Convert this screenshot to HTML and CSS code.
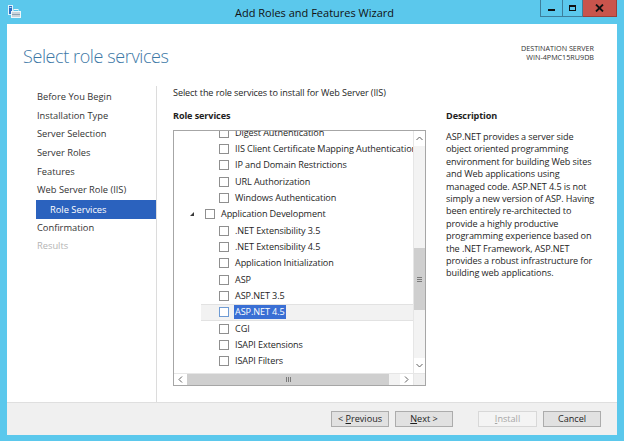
FILE: index.html
```html
<!DOCTYPE html>
<html>
<head>
<meta charset="utf-8">
<link rel="stylesheet" href="styles.css">
</head>
<body>
<div class="window">
  <div class="titlebar">
    <svg class="appicon" width="13" height="13" viewBox="0 0 13 13">
      <rect x="0.5" y="0.5" width="4" height="9" fill="#2f6fc4" stroke="#dff3fb" stroke-width="1"/>
      <rect x="1.5" y="2" width="2" height="1" fill="#bfe4f7"/>
      <rect x="3.5" y="6.5" width="9" height="6" fill="#c9d3db" stroke="#eef6fa" stroke-width="1"/>
      <rect x="6" y="4.5" width="4" height="2" fill="none" stroke="#eef6fa" stroke-width="1"/>
      <rect x="4" y="9" width="8" height="1" fill="#8ea2b2"/>
    </svg>
    <div class="title">Add Roles and Features Wizard</div>
    <div class="controls">
      <div class="ctl min"><span class="minbar"></span></div>
      <div class="ctl max"><span class="maxbox"></span></div>
      <div class="ctl close">
        <svg width="9" height="8" viewBox="0 0 9 8"><path d="M1 0.5 L8 7.5 M8 0.5 L1 7.5" stroke="#111" stroke-width="1.8"/></svg>
      </div>
    </div>
  </div>
  <div class="client">
    <div class="header">
      <h1 class="pagetitle">Select role services</h1>
      <div class="dest">
        <div>DESTINATION SERVER</div>
        <div>WIN-4PMC15RU9DB</div>
      </div>
    </div>
    <div class="body">
      <nav class="nav">
        <div class="navitem">Before You Begin</div>
        <div class="navitem">Installation Type</div>
        <div class="navitem">Server Selection</div>
        <div class="navitem">Server Roles</div>
        <div class="navitem">Features</div>
        <div class="navitem">Web Server Role (IIS)</div>
        <div class="navitem active">Role Services</div>
        <div class="navitem">Confirmation</div>
        <div class="navitem disabled">Results</div>
      </nav>
      <div class="main">
        <p class="intro">Select the role services to install for Web Server (IIS)</p>
        <div class="columns">
          <div class="leftcol">
            <h2 class="heading">Role services</h2>
            <div class="treebox">
              <div class="treearea">
                <div class="viewport">
                  <div class="tree">
                    <div class="row l2"><div class="inner"><span class="exp"></span><span class="cb"></span><span class="lbl">Digest Authentication</span></div></div>
                    <div class="row l2"><div class="inner"><span class="exp"></span><span class="cb"></span><span class="lbl">IIS Client Certificate Mapping Authentication</span></div></div>
                    <div class="row l2"><div class="inner"><span class="exp"></span><span class="cb"></span><span class="lbl">IP and Domain Restrictions</span></div></div>
                    <div class="row l2"><div class="inner"><span class="exp"></span><span class="cb"></span><span class="lbl">URL Authorization</span></div></div>
                    <div class="row l2"><div class="inner"><span class="exp"></span><span class="cb"></span><span class="lbl">Windows Authentication</span></div></div>
                    <div class="row l1"><div class="inner"><span class="exp"><span class="tri"></span></span><span class="cb"></span><span class="lbl">Application Development</span></div></div>
                    <div class="row l2"><div class="inner"><span class="exp"></span><span class="cb"></span><span class="lbl">.NET Extensibility 3.5</span></div></div>
                    <div class="row l2"><div class="inner"><span class="exp"></span><span class="cb"></span><span class="lbl">.NET Extensibility 4.5</span></div></div>
                    <div class="row l2"><div class="inner"><span class="exp"></span><span class="cb"></span><span class="lbl">Application Initialization</span></div></div>
                    <div class="row l2"><div class="inner"><span class="exp"></span><span class="cb"></span><span class="lbl">ASP</span></div></div>
                    <div class="row l2"><div class="inner"><span class="exp"></span><span class="cb"></span><span class="lbl">ASP.NET 3.5</span></div></div>
                    <div class="row l2 selected"><div class="inner"><span class="exp"></span><span class="cb"></span><span class="lbl">ASP.NET 4.5</span></div></div>
                    <div class="row l2"><div class="inner"><span class="exp"></span><span class="cb"></span><span class="lbl">CGI</span></div></div>
                    <div class="row l2"><div class="inner"><span class="exp"></span><span class="cb"></span><span class="lbl">ISAPI Extensions</span></div></div>
                    <div class="row l2"><div class="inner"><span class="exp"></span><span class="cb"></span><span class="lbl">ISAPI Filters</span></div></div>
                    <div class="row l2"><div class="inner"><span class="exp"></span><span class="cb"></span><span class="lbl">Server Side Includes</span></div></div>
                  </div>
                </div>
                <div class="vscroll">
                  <div class="sbtn up"><svg width="7" height="5" viewBox="0 0 7 5"><path d="M0.5 4 L3.5 1 L6.5 4" fill="none" stroke="#606060" stroke-width="1"/></svg></div>
                  <div class="vtrack">
                    <div class="vthumb"><span class="grip-h"></span></div>
                  </div>
                  <div class="sbtn down"><svg width="7" height="5" viewBox="0 0 7 5"><path d="M0.5 1 L3.5 4 L6.5 1" fill="none" stroke="#606060" stroke-width="1"/></svg></div>
                </div>
              </div>
              <div class="hscrollrow">
                <div class="hscroll">
                  <div class="sbtn left"><svg width="5" height="7" viewBox="0 0 5 7"><path d="M4 0.5 L1 3.5 L4 6.5" fill="none" stroke="#606060" stroke-width="1"/></svg></div>
                  <div class="htrack">
                    <div class="hthumb"><span class="grip-v"></span></div>
                  </div>
                  <div class="sbtn right"><svg width="5" height="7" viewBox="0 0 5 7"><path d="M1 0.5 L4 3.5 L1 6.5" fill="none" stroke="#606060" stroke-width="1"/></svg></div>
                </div>
                <div class="corner"></div>
              </div>
            </div>
          </div>
          <div class="rightcol">
            <h2 class="heading">Description</h2>
            <p class="desc">ASP.NET provides a server side<br>object oriented programming<br>environment for building Web sites<br>and Web applications using<br>managed code. ASP.NET 4.5 is not<br>simply a new version of ASP. Having<br>been entirely re-architected to<br>provide a highly productive<br>programming experience based on<br>the .NET Framework, ASP.NET<br>provides a robust infrastructure for<br>building web applications.</p>
          </div>
        </div>
      </div>
    </div>
    <div class="footer">
      <button class="btn"><span>&lt; <u>P</u>revious</span></button>
      <button class="btn"><span><u>N</u>ext &gt;</span></button>
      <button class="btn disabled gapleft"><span><u>I</u>nstall</span></button>
      <button class="btn"><span>Cancel</span></button>
    </div>
  </div>
</div>
</body>
</html>
```

FILE: styles.css
```css
* { box-sizing: border-box; }
html, body { margin: 0; padding: 0; }
body {
  width: 624px;
  height: 441px;
  overflow: hidden;
  background: #5bc8ec;
  font-family: "Open Sans", "Noto Sans", sans-serif;
  color: #1e1e1e;
}
.window {
  width: 624px;
  height: 441px;
  display: flex;
  flex-direction: column;
  background: #5bc8ec;
}
.titlebar {
  height: 24px;
  display: flex;
  align-items: flex-start;
  position: relative;
  flex: none;
}
.appicon { margin: 5px 0 0 8px; flex: none; }
.title {
  flex: 1;
  text-align: center;
  font-size: 11px;
  line-height: 26px;
  color: #111;
  padding-left: 68px;
}
.controls {
  display: flex;
  margin-right: 7px;
  height: 17px;
  flex: none;
}
.ctl {
  height: 17px;
  display: flex;
  align-items: center;
  justify-content: center;
  border: 1px solid #3d7f9c;
  border-top: none;
}
.ctl.min { width: 22px; border-right: none; }
.ctl.max { width: 21px; }
.ctl.close { width: 34px; background: #c9544c; border-color: #9c3f38; border-left: none; }
.minbar { display: block; width: 7px; height: 2px; background: #111; margin-top: 4px; }
.maxbox { display: block; width: 7px; height: 6px; border: 1px solid #111; border-top-width: 2px; }

.client {
  flex: 1;
  margin: 0 7px 6px 7px;
  background: #ffffff;
  display: flex;
  flex-direction: column;
}
.header {
  height: 62px;
  display: flex;
  justify-content: space-between;
  align-items: flex-start;
  flex: none;
}
.pagetitle {
  margin: 20px 0 0 16px;
  font-weight: 300;
  font-size: 18px;
  letter-spacing: -0.4px;
  line-height: 24px;
  color: #3d78a6;
}
.dest {
  margin: 20px 23px 0 0;
  text-align: right;
  font-size: 7.2px;
  line-height: 9px;
  color: #333;
}
.body {
  flex: 1;
  display: flex;
  min-height: 0;
}
.nav {
  width: 150px;
  flex: none;
  border-right: 1px solid #dcdcdc;
  padding: 2px 0 0 29px;
  font-size: 9.3px;
  color: #333;
}
.navitem {
  height: 18.65px;
  line-height: 18.65px;
  padding-left: 1px;
  white-space: nowrap;
}
.navitem.active {
  background: #2b62be;
  color: #fff;
  padding-left: 14px;
  height: 19px;
  line-height: 19px;
}
.navitem.disabled { color: #b4b4b4; }

.main {
  flex: 1;
  padding-left: 16px;
  font-size: 9.1px;
  letter-spacing: -0.1px;
}
.intro { margin: 0; line-height: 14px; white-space: nowrap; }
.columns { display: flex; margin-top: 9px; }
.leftcol { width: 253px; flex: none; }
.rightcol { margin-left: 20px; width: 160px; }
.heading {
  margin: 0;
  font-size: 9.1px;
  font-weight: 700;
  line-height: 14px;
}
.treebox {
  margin-top: 7px;
  height: 256px;
  border: 1px solid #a6a6a6;
  display: flex;
  flex-direction: column;
  background: #fff;
}
.treearea { flex: 1; display: flex; min-height: 0; }
.viewport { flex: 1; overflow: hidden; position: relative; }
.tree { margin-top: -6.6px; }
.row {
  height: 16.35px;
  display: flex;
  white-space: nowrap;
}
.row.l1 { padding-left: 15px; }
.row.l2 { padding-left: 27px; }
.row.l2 .inner { padding-left: 2px; }
.inner {
  flex: 1;
  display: flex;
  align-items: center;
  border: 1px solid transparent;
  border-left: none;
  border-right: none;
}
.exp { width: 16px; flex: none; display: flex; align-items: center; }
.tri {
  display: block;
  width: 0; height: 0;
  border-right: 4px solid #3a3a3a;
  border-top: 4px solid transparent;
  margin-left: 1px;
}
.cb {
  width: 10px; height: 10px;
  border: 1px solid #8f8f8f;
  background: #fff;
  flex: none;
  margin-right: 6px;
}
.lbl { line-height: 14px; }
.row.selected .inner {
  background: #f2f2f2;
  border-color: #e2e2e2;
}
.row.selected .cb { border-color: #6e9bd4; }
.row.selected .lbl { background: #3a6fd4; color: #fff; padding: 0 1px; margin-left: -1px; }

.vscroll {
  width: 12px;
  flex: none;
  display: flex;
  flex-direction: column;
  border-left: 1px solid #e6e6e6;
  background: #f3f3f3;
}
.sbtn {
  flex: none;
  display: flex;
  align-items: center;
  justify-content: center;
  background: #fff;
}
.sbtn.up, .sbtn.down { height: 15px; }
.vtrack { flex: 1; position: relative; }
.vthumb {
  position: absolute;
  left: 0; right: 0;
  top: 102px;
  height: 62px;
  background: #cfcfcf;
  display: flex;
  align-items: center;
  justify-content: center;
}
.grip-h {
  display: block;
  width: 5px; height: 5px;
  border-top: 1px solid #7a7a7a;
  border-bottom: 1px solid #7a7a7a;
  position: relative;
}
.grip-h::after {
  content: "";
  position: absolute;
  left: 0; right: 0; top: 1px;
  border-top: 1px solid #7a7a7a;
}
.hscrollrow { height: 12px; display: flex; flex: none; border-top: 1px solid #e6e6e6; }
.hscroll { flex: 1; display: flex; background: #f3f3f3; }
.sbtn.left, .sbtn.right { width: 13px; }
.htrack { flex: 1; position: relative; }
.hthumb {
  position: absolute;
  top: 0; bottom: 0;
  left: 0;
  width: 202px;
  background: #cfcfcf;
  display: flex;
  align-items: center;
  justify-content: center;
}
.grip-v {
  display: block;
  width: 5px; height: 5px;
  border-left: 1px solid #7a7a7a;
  border-right: 1px solid #7a7a7a;
  position: relative;
}
.grip-v::after {
  content: "";
  position: absolute;
  top: 0; bottom: 0; left: 1px;
  border-left: 1px solid #7a7a7a;
}
.corner { width: 12px; flex: none; background: #f0f0f0; border-left: 1px solid #e6e6e6; }

.desc {
  margin: 8px 0 0 0;
  line-height: 12.4px;
  white-space: nowrap;
}

.footer {
  height: 33px;
  flex: none;
  background: #f0f0f0;
  border-top: 1px solid #dfdfdf;
  display: flex;
  justify-content: flex-end;
  align-items: flex-start;
  padding: 8px 16px 0 0;
}
.btn {
  width: 58px;
  height: 16px;
  margin: 0 0 0 6px;
  padding: 0;
  border: 1px solid #acacac;
  background: #e1e1e1;
  font-family: inherit;
  font-size: 9.1px;
  color: #1e1e1e;
  line-height: 14px;
  text-align: center;
}
.btn u { text-decoration: underline; }
.btn.gapleft { margin-left: 25px; width: 59px; }
.btn.disabled { background: #f4f4f4; border-color: #d8d8d8; color: #a6a6a6; }
```
